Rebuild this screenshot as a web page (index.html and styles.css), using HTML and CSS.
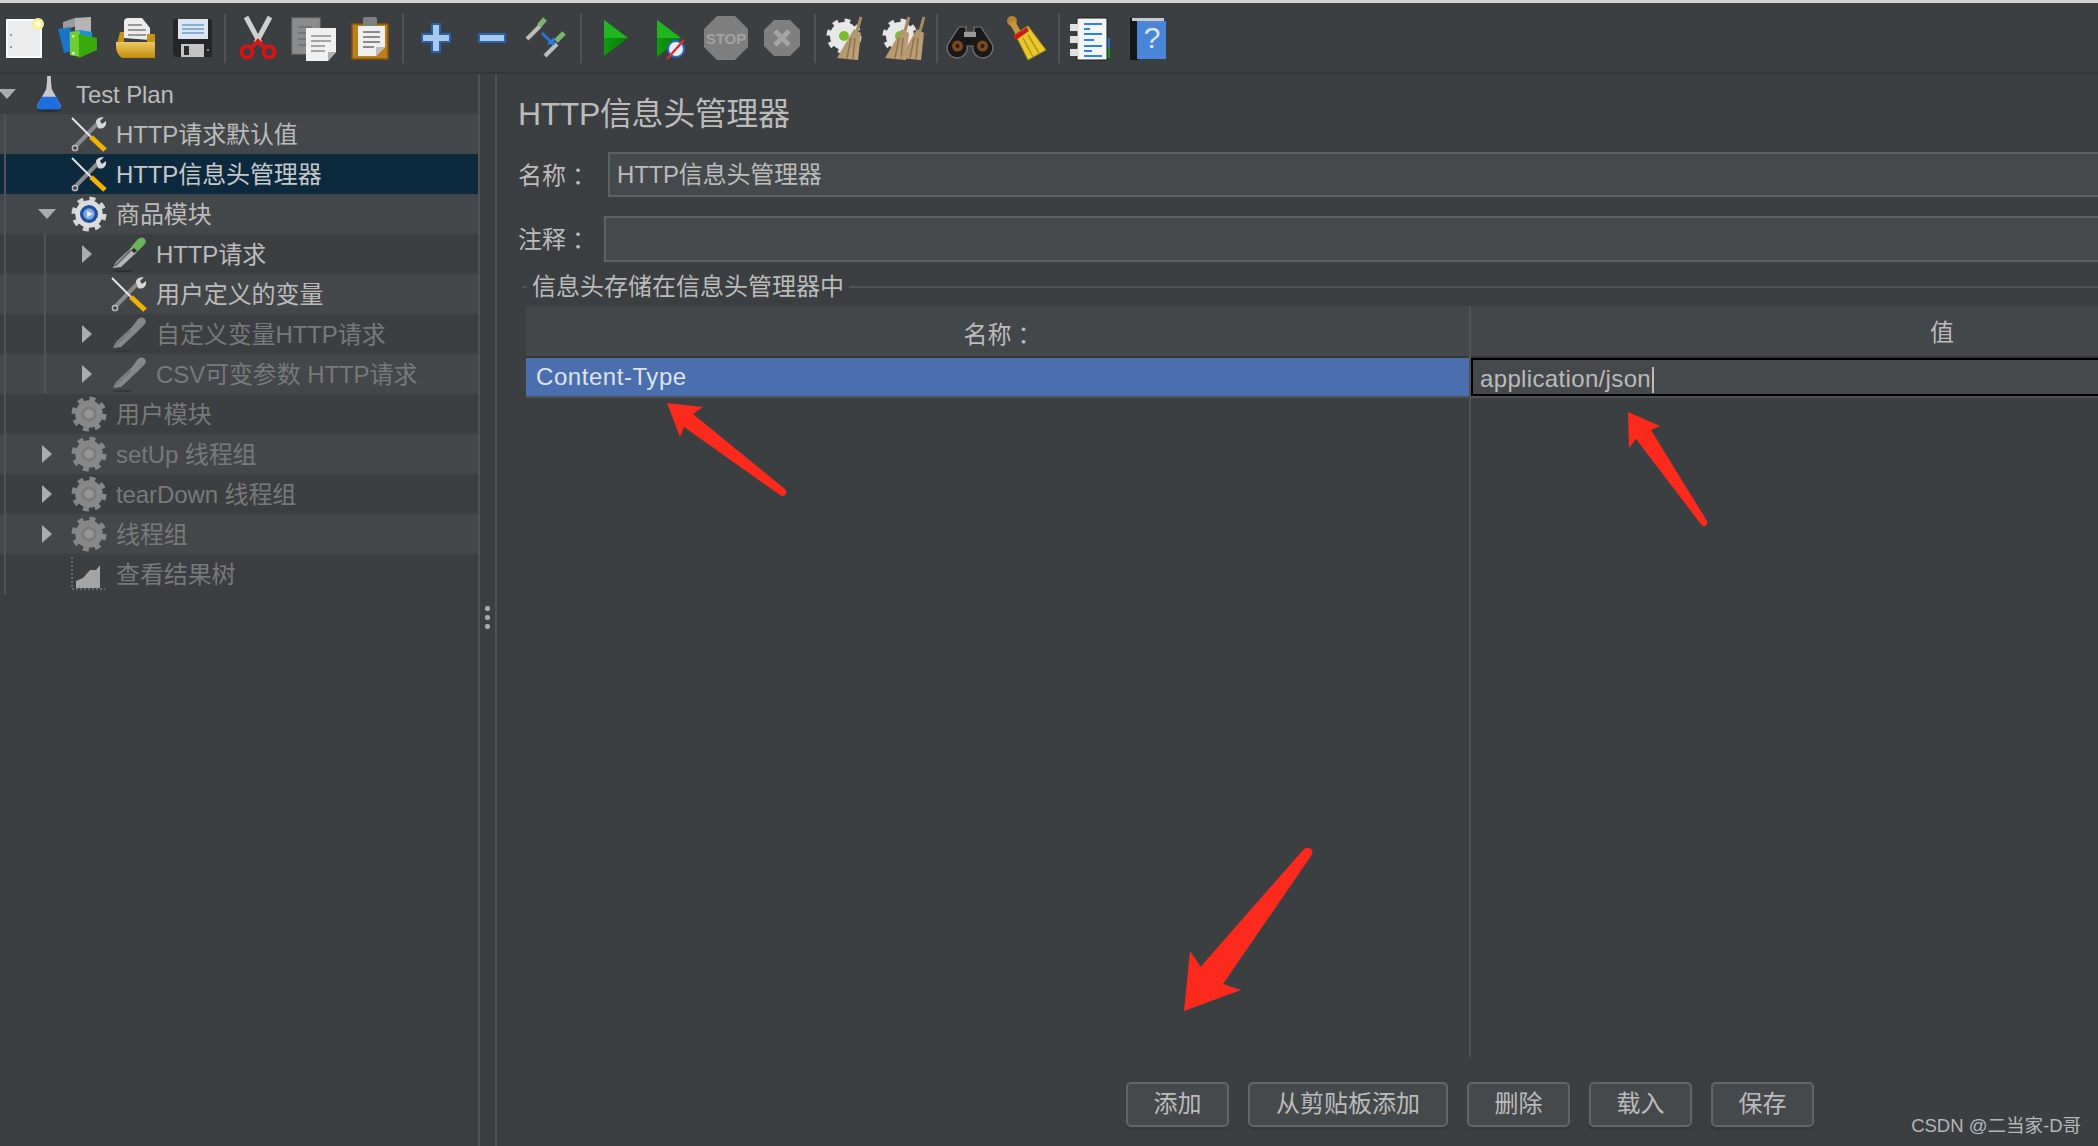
FILE: index.html
```html
<!DOCTYPE html>
<html lang="zh-CN">
<head>
<meta charset="utf-8">
<title>HTTP信息头管理器</title>
<link rel="stylesheet" href="styles.css">
</head>
<body>
<svg class="defs" width="0" height="0" aria-hidden="true">
  <defs>
    <linearGradient id="gFolder" x1="0" y1="0" x2="0" y2="1"><stop offset="0" stop-color="#f0c860"/><stop offset="1" stop-color="#c08a10"/></linearGradient>
    <linearGradient id="gGreen" x1="0" y1="0" x2="1" y2="0"><stop offset="0" stop-color="#0f9a0f"/><stop offset="1" stop-color="#0a7a0a"/></linearGradient>
    <linearGradient id="gBroom" x1="0" y1="0" x2="1" y2="1"><stop offset="0" stop-color="#a58a66"/><stop offset="1" stop-color="#c4a678"/></linearGradient>
    <symbol id="tools" viewBox="0 0 36 36">
      <path d="M3 32 L26 8" stroke="#8a8a8a" stroke-width="4" fill="none"/>
      <circle cx="4" cy="32" r="2.6" fill="#3c3f41" stroke="#bdbdbd" stroke-width="1.5"/>
      <path d="M26 9 C23 4 27 1 33 1 L29 5 L31 8 L35 5 C36 11 31 14 27 12 Z" fill="#d8d8d8"/>
      <path d="M1 2 L20 21" stroke="#e8e8e8" stroke-width="1.8"/>
      <path d="M20 21 L34 34" stroke="#f0b400" stroke-width="5"/>
    </symbol>
    <symbol id="flask" viewBox="0 0 36 38">
      <path d="M16 5 L16 0 L20 0 L20 5 L21 14 L30 30 Q31 35 27 35 L9 35 Q5 35 6 30 L15 14 Z" fill="#c8c8c8"/>
      <path d="M10 22 L26 22 L30 31 Q31 36 26 36 L10 36 Q5 36 6 31 Z" fill="#1d6fe0"/>
      <ellipse cx="18" cy="36.500" rx="14" ry="1.500" fill="#2d3032"/>
    </symbol>
    <symbol id="gear" viewBox="0 0 38 38">
      <circle cx="19" cy="19" r="15.5" fill="none" stroke="#d4d4d4" stroke-width="6" stroke-dasharray="6 6.17"/>
      <circle cx="19" cy="19" r="14.500" fill="#dcdcdc"/>
      <circle cx="19" cy="19" r="9.500" fill="#1f4f9e"/>
      <circle cx="19" cy="19" r="6" fill="#7fa8dc"/>
      <path d="M17 15.5 L23 19 L17 22.5 Z" fill="#e8eef6"/>
    </symbol>
    <symbol id="gear-off" viewBox="0 0 38 38">
      <circle cx="19" cy="19" r="15.5" fill="none" stroke="#868686" stroke-width="6" stroke-dasharray="6 6.17"/>
      <circle cx="19" cy="19" r="14.500" fill="#888888"/>
      <circle cx="19" cy="19" r="8" fill="#7c7c7c"/>
      <circle cx="19" cy="19" r="5" fill="#959595"/>
    </symbol>
    <symbol id="pipette" viewBox="0 0 36 36">
      <path d="M2 32 L5 26 L21 11 L26 16 L10 31 Z" fill="#b5b5b5"/>
      <path d="M4 30 L20 14" stroke="#6c6c6c" stroke-width="2"/>
      <path d="M20 11 L27 3 Q31 0 34 3 Q36 6 33 9 L26 16 Z" fill="#6cb35c"/>
      <path d="M23 12 L26 15 L23 17 L20 14 Z" fill="#2d3032"/>
      <ellipse cx="12" cy="35" rx="10" ry="1" fill="#2d3032"/>
    </symbol>
    <symbol id="pipette-off" viewBox="0 0 36 36">
      <path d="M2 32 L5 26 L21 11 L27 3 Q31 0 34 3 Q36 6 33 9 L26 16 L10 31 Z" fill="#878787"/>
      <path d="M5 29 L20 14" stroke="#737373" stroke-width="1.500"/>
      <ellipse cx="12" cy="35" rx="10" ry="1" fill="#35383a"/>
    </symbol>
    <symbol id="chart" viewBox="0 0 36 36">
      <path d="M1 1 V33 H34" stroke="#777a7c" stroke-width="1.4" stroke-dasharray="2 2" fill="none"/>
      <path d="M5 32 V25 L12 22 L19 14 L25 14 L29 9 V32 Z" fill="#a4a4a4"/>
    </symbol>
    <symbol id="run" viewBox="0 0 48 48">
      <path d="M14 6 L38 24 L14 42 Z" fill="url(#gGreen)"/>
      <path d="M14 6 L38 24 L14 24 Z" fill="#21b521"/>
    </symbol>
    <symbol id="clearGear" viewBox="0 0 48 48">
      <circle cx="20" cy="22" r="15" fill="none" stroke="#e4e4e4" stroke-width="5" stroke-dasharray="5.5 6.3"/>
      <circle cx="20" cy="22" r="14" fill="#e8e8e8"/>
      <circle cx="20" cy="22" r="5" fill="#7cbc30"/>
    </symbol>
    <symbol id="besom" viewBox="0 0 48 48">
      <path d="M37 3 L33 17" stroke="#a48a62" stroke-width="3"/>
      <path d="M30 15 L37 19 L34 46 L13 44 Z" fill="url(#gBroom)"/>
      <path d="M27 24 L23 44 M31 24 L29 45" stroke="#8a7050" stroke-width="1.4"/>
    </symbol>
  </defs>
</svg>

<div class="topline"></div>

<div class="toolbar">
  <div class="tb"><svg class="tb-icon" viewBox="0 0 48 48"><rect x="7" y="6" width="34" height="37" fill="#ececec" stroke="#fafafa" stroke-width="2"/><rect x="10" y="20" width="2" height="2" fill="#999"/><rect x="10" y="32" width="2" height="2" fill="#999"/><circle cx="38" cy="10" r="6" fill="#f6ee9a"/><circle cx="38" cy="10" r="3" fill="#fffde0"/></svg></div>
  <div class="tb"><svg class="tb-icon" viewBox="0 0 48 48"><path d="M7 8 L19 4 L21 12 L7 16 Z" fill="#9c9c9c"/><path d="M19 4 L35 3 L35 18 L19 18 Z" fill="#b5b5b5"/><path d="M2 15 L14 13 L20 36 L8 39 Z" fill="#1c74c8"/><path d="M13 18 L24 16 L36 18 L36 32 L14 40 Z" fill="#1f8ed8"/><path d="M14 18 L24 17 L24 43 L14 41 Z" fill="#6fcf2f"/><path d="M23 20 L41 24 V36 L23 44 Z" fill="#3aa90a"/><rect x="16" y="38" width="2.5" height="2.5" fill="#e8ffe0"/><rect x="16" y="21" width="2.5" height="2.5" fill="#c8f0b0"/></svg></div>
  <div class="tb"><svg class="tb-icon" viewBox="0 0 48 48"><path d="M12 24 V8 Q12 4 16 4 H30 L38 14 V26 Z" fill="#ececec"/><path d="M16 11 H30 M16 16 H34 M16 21 H34" stroke="#9a9a9a" stroke-width="2"/><path d="M8 18 H12 V28 H35 L35 20 H43 V43 H10 Q4 38 5 30 Z" fill="#c49418"/><path d="M4 28 H43 V44 H10 Q4 40 4 32 Z" fill="url(#gFolder)"/></svg></div>
  <div class="tb"><svg class="tb-icon" viewBox="0 0 48 48"><path d="M5 7 Q5 5 7 5 H42 L44 7 V43 H8 L5 41 Z" fill="#252627"/><rect x="10" y="5" width="30" height="20" fill="#dde6f0"/><path d="M14 11 H36 M14 15 H36 M14 19 H36" stroke="#8aaed0" stroke-width="2"/><rect x="13" y="30" width="23" height="13" fill="#c4c4c4"/><rect x="16" y="32" width="5" height="9" fill="#2c2c2c"/><rect x="39" y="35" width="2" height="2" fill="#888"/></svg></div>
  <span class="sep"></span>
  <div class="tb"><svg class="tb-icon" viewBox="0 0 48 48"><path d="M12 3 L26 29 M36 3 L22 29" stroke="#d0d0d0" stroke-width="5" fill="none"/><circle cx="13" cy="38" r="5.5" fill="none" stroke="#d31515" stroke-width="4"/><circle cx="35" cy="38" r="5.5" fill="none" stroke="#d31515" stroke-width="4"/><path d="M17 34 L24 27 L31 34" stroke="#d31515" stroke-width="4" fill="none"/></svg></div>
  <div class="tb"><svg class="tb-icon" viewBox="0 0 48 48"><rect x="2" y="4" width="28" height="36" fill="#8c8c8c" stroke="#7a7a7a"/><path d="M8 13 H22 M8 19 H22 M8 25 H22 M8 31 H22" stroke="#757575" stroke-width="2"/><path d="M16 14 H46 V38 L38 47 H16 Z" fill="#f0f0f0"/><path d="M21 22 H41 M21 27 H41 M21 32 H35 M21 37 H35" stroke="#a5a5a5" stroke-width="2"/><path d="M38 47 V38 H46 Z" fill="#b0b0b0"/></svg></div>
  <div class="tb"><svg class="tb-icon" viewBox="0 0 48 48"><rect x="6" y="10" width="36" height="35" fill="#b97f1f" stroke="#84550c" stroke-width="1.5"/><rect x="17" y="3" width="14" height="9" rx="2" fill="#7f7f7f"/><path d="M12 12 H39 V33 L30 42 H12 Z" fill="#f0f0f0"/><path d="M17 18 H34 M17 23 H34 M17 28 H34 M17 33 H28" stroke="#8c8c8c" stroke-width="2"/><path d="M30 42 V33 H39 Z" fill="#bdbdbd"/></svg></div>
  <span class="sep"></span>
  <div class="tb"><svg class="tb-icon" viewBox="0 0 48 48"><path d="M20 10 H28 V20 H38 V28 H28 V38 H20 V28 H10 V20 H20 Z" fill="#a8c8ec" stroke="#2a62aa" stroke-width="2"/></svg></div>
  <div class="tb"><svg class="tb-icon" viewBox="0 0 48 48"><rect x="11" y="20" width="26" height="8" fill="#a8c8ec" stroke="#2a62aa" stroke-width="2"/></svg></div>
  <div class="tb"><svg class="tb-icon" viewBox="0 0 48 48"><path d="M3 25 L16 12" stroke="#bcbcbc" stroke-width="4"/><path d="M15 12 L21 5" stroke="#7cb56c" stroke-width="5"/><path d="M24 38 L36 26" stroke="#bcbcbc" stroke-width="4" transform="translate(-3 4)"/><path d="M33 30 L41 22" stroke="#7cb56c" stroke-width="5" transform="translate(-1 -3)"/><path d="M18 19 L28 29" stroke="#2a7ae4" stroke-width="2.5"/><path d="M23 30 L31 31 L30 23 Z" fill="#2a7ae4"/></svg></div>
  <span class="sep"></span>
  <div class="tb"><svg class="tb-icon"><use href="#run"/></svg></div>
  <div class="tb"><svg class="tb-icon" viewBox="0 0 48 48"><path d="M11 6 L35 24 L11 43 Z" fill="url(#gGreen)"/><path d="M11 6 L35 24 L11 24 Z" fill="#21b521"/><circle cx="30" cy="35" r="8" fill="#e8f0fa" stroke="#2a6ac8" stroke-width="2"/><path d="M21 45 L38 26" stroke="#d83030" stroke-width="2.5"/></svg></div>
  <div class="tb"><svg class="tb-icon" viewBox="0 0 48 48"><path d="M15 2 H33 L46 15 V33 L33 46 H15 L2 33 V15 Z" fill="#7f7f7f"/><text x="24" y="30" text-anchor="middle" class="stop-text">STOP</text></svg></div>
  <div class="tb"><svg class="tb-icon" viewBox="0 0 48 48"><path d="M16 6 H32 L42 16 V32 L32 42 H16 L6 32 V16 Z" fill="#7f7f7f"/><path d="M17 17 L31 31 M31 17 L17 31" stroke="#a4a4a4" stroke-width="5"/></svg></div>
  <span class="sep"></span>
  <div class="tb"><svg class="tb-icon"><use href="#clearGear"/><use href="#besom" /></svg></div>
  <div class="tb"><svg class="tb-icon" viewBox="0 0 48 48"><use href="#clearGear" width="48" height="48"/><use href="#besom" width="48" height="48" x="-8"/><use href="#besom" width="48" height="48" x="7"/></svg></div>
  <span class="sep"></span>
  <div class="tb"><svg class="tb-icon" viewBox="0 0 48 48"><path d="M13 13 H20 V18 H28 V13 H35 L46 30 A10 10 0 1 1 27 32 H21 A10 10 0 1 1 2 30 Z" fill="#191919" stroke="#777" stroke-width="1.2"/><rect x="18" y="18" width="12" height="5" fill="#9a9a9a"/><circle cx="11.500" cy="32" r="5.500" fill="#7a4a22"/><circle cx="36.500" cy="32" r="5.500" fill="#7a4a22"/><circle cx="11.500" cy="32" r="2" fill="#2a1a10"/><circle cx="36.500" cy="32" r="2" fill="#2a1a10"/></svg></div>
  <div class="tb"><svg class="tb-icon" viewBox="0 0 48 48"><circle cx="10" cy="7" r="5" fill="#b8822e"/><path d="M10 8 L18 22" stroke="#c8963c" stroke-width="6"/><path d="M13 20 L26 12 L44 36 L26 46 Z" fill="#e8c82a" stroke="#9a8818"/><path d="M11 22 L25 13 L27 17 L14 26 Z" fill="#c81e1e"/><path d="M21 24 L31 43 M26 21 L37 39" stroke="#b09a18" stroke-width="1.5"/></svg></div>
  <span class="sep"></span>
  <div class="tb"><svg class="tb-icon" viewBox="0 0 48 48"><rect x="36" y="24" width="6" height="10" fill="#2a6ac8"/><rect x="36" y="34" width="6" height="10" fill="#1d8a1d"/><rect x="9" y="4" width="30" height="42" fill="#f5f5f5" stroke="#1c1c1c"/><path d="M16 10 H34 M16 20 H34 M16 32 H34 M16 42 H34" stroke="#2a82ec" stroke-width="2"/><path d="M16 15 H22 M16 26 H26 M16 37 H24" stroke="#2a82ec" stroke-width="2"/><rect x="2" y="10" width="9" height="7" fill="#e0e0e0"/><rect x="2" y="22" width="9" height="7" fill="#e0e0e0"/><rect x="2" y="35" width="9" height="7" fill="#e0e0e0"/></svg></div>
  <div class="tb"><svg class="tb-icon" viewBox="0 0 48 48"><rect x="6" y="4" width="8" height="42" fill="#151515"/><rect x="8" y="4" width="32" height="3" fill="#c8c8c8"/><rect x="13" y="7" width="29" height="38" fill="#4a86d8"/><text x="28" y="34" text-anchor="middle" class="help-text">?</text></svg></div>
</div>

<div class="main">
  <div class="tree">
    <span class="guide guide-outer"></span>
    <span class="guide guide-inner"></span>
    <div class="row d0"><span class="toggle open"></span><svg class="icon"><use href="#flask"/></svg><span class="label">Test Plan</span></div>
    <div class="row d1 alt"><span class="toggle"></span><svg class="icon"><use href="#tools"/></svg><span class="label">HTTP请求默认值</span></div>
    <div class="row d1 selected"><span class="toggle"></span><svg class="icon"><use href="#tools"/></svg><span class="label">HTTP信息头管理器</span></div>
    <div class="row d1 alt"><span class="toggle open"></span><svg class="icon"><use href="#gear"/></svg><span class="label">商品模块</span></div>
    <div class="row d2"><span class="toggle closed"></span><svg class="icon"><use href="#pipette"/></svg><span class="label">HTTP请求</span></div>
    <div class="row d2 alt"><span class="toggle"></span><svg class="icon"><use href="#tools"/></svg><span class="label">用户定义的变量</span></div>
    <div class="row d2 off"><span class="toggle closed"></span><svg class="icon"><use href="#pipette-off"/></svg><span class="label">自定义变量HTTP请求</span></div>
    <div class="row d2 alt off"><span class="toggle closed"></span><svg class="icon"><use href="#pipette-off"/></svg><span class="label">CSV可变参数 HTTP请求</span></div>
    <div class="row d1 off"><span class="toggle"></span><svg class="icon"><use href="#gear-off"/></svg><span class="label">用户模块</span></div>
    <div class="row d1 alt off"><span class="toggle closed"></span><svg class="icon"><use href="#gear-off"/></svg><span class="label">setUp 线程组</span></div>
    <div class="row d1 off"><span class="toggle closed"></span><svg class="icon"><use href="#gear-off"/></svg><span class="label">tearDown 线程组</span></div>
    <div class="row d1 alt off"><span class="toggle closed"></span><svg class="icon"><use href="#gear-off"/></svg><span class="label">线程组</span></div>
    <div class="row d1 off"><span class="toggle"></span><svg class="icon"><use href="#chart"/></svg><span class="label">查看结果树</span></div>
  </div>

  <div class="splitter"><i></i><i></i><i></i></div>

  <div class="panel">
    <h1 class="title">HTTP信息头管理器</h1>
    <div class="field field-name">
      <label class="field-label">名称<span class="colon">：</span></label>
      <div class="input">HTTP信息头管理器</div>
    </div>
    <div class="field field-comment">
      <label class="field-label">注释<span class="colon">：</span></label>
      <div class="input"></div>
    </div>
    <div class="legend"><span class="legend-line short"></span><span>信息头存储在信息头管理器中</span><span class="legend-line"></span></div>
    <div class="table">
      <div class="col col-name">
        <div class="th th-name">名称<span class="colon">：</span></div>
        <div class="td td-selected">Content-Type</div>
      </div>
      <div class="col col-value">
        <div class="th">值</div>
        <div class="td"><div class="editor">application/json<span class="caret"></span></div></div>
      </div>
    </div>
    <div class="buttons">
      <button class="btn">添加</button>
      <button class="btn btn-wide">从剪贴板添加</button>
      <button class="btn">删除</button>
      <button class="btn">载入</button>
      <button class="btn">保存</button>
    </div>
  </div>
</div>

<div class="watermark">CSDN @二当家-D哥</div>

<svg class="arrows" viewBox="0 0 2098 1146" aria-hidden="true">
  <path d="M667 403 L703 407 L693 414 L785 489 Q788 493 785 495 Q783 497 780 495 L684 427 L680 437 Z"/>
  <path d="M1628 412 L1660 426 L1651 430 L1707 521 Q1708 525 1705 526 Q1702 527 1700 523 L1636 439 L1629 448 Z"/>
  <path d="M1184 1011 L1190 951 L1200.700 966.700 L1303 850 Q1307 846 1311 849 Q1314 852 1311 856 L1223 984 L1241 990 Z"/>
</svg>
</body>
</html>
```
FILE: styles.css
```css
* { box-sizing: border-box; }

html, body {
  margin: 0;
  height: 100%;
}

body {
  position: relative;
  width: 2098px;
  height: 1146px;
  overflow: hidden;
  display: flex;
  flex-direction: column;
  background: #3c3f41;
  color: #bbbbbb;
  font-family: "Liberation Sans", "Noto Sans CJK SC", sans-serif;
  font-size: 24px;
  line-height: 28px;
}

.defs { position: absolute; }

.topline {
  flex: none;
  height: 3px;
  background: #d4d4d4;
}

/* toolbar */
.toolbar {
  flex: none;
  display: flex;
  align-items: flex-start;
  height: 71px;
  margin-left: -4px;
  padding-top: 11px;
  border-bottom: 2px solid #343739;
}

.tb {
  flex: none;
  width: 56px;
  height: 48px;
  display: flex;
  justify-content: center;
}

.tb-icon {
  width: 48px;
  height: 48px;
}

.sep {
  flex: none;
  width: 2px;
  height: 49px;
  margin: 0 4px;
  background: #505355;
}

.stop-text {
  font: bold 15px "Liberation Sans", sans-serif;
  fill: #a2a2a2;
}

.help-text {
  font: 30px "Liberation Sans", sans-serif;
  fill: #dce8f8;
}

/* main split */
.main {
  flex: 1;
  display: flex;
  min-height: 0;
}

.tree {
  position: relative;
  flex: none;
  width: 480px;
  border-right: 2px solid #505355;
  overflow: hidden;
}

.guide {
  position: absolute;
  width: 2px;
  background: #505355;
}

.guide-outer { left: 4px; top: 40px; height: 480px; }
.guide-inner { left: 44px; top: 160px; height: 160px; }

.row {
  display: flex;
  align-items: center;
  height: 40px;
  white-space: nowrap;
}

.row.d1 { padding-left: 40px; }
.row.d2 { padding-left: 80px; }
.row.alt { background: #44474a; }
.row.selected { background: #0d293e; color: #c6c9cb; }
.row.off { color: #77797b; }

.toggle {
  position: relative;
  z-index: 1;
  flex: none;
  width: 14px;
  height: 18px;
  margin-right: 17px;
}

.toggle.open::before {
  content: "";
  position: absolute;
  left: -2px;
  top: 4px;
  border-style: solid;
  border-width: 10px 9px 0;
  border-color: #a9abad transparent transparent;
}

.toggle.closed::before {
  content: "";
  position: absolute;
  left: 2px;
  top: 0;
  border-style: solid;
  border-width: 9px 0 9px 10px;
  border-color: transparent transparent transparent #a9abad;
}

.icon {
  flex: none;
  width: 36px;
  height: 36px;
}

.label {
  margin-left: 9px;
  padding-top: 2px;
  letter-spacing: -0.1px;
}

/* splitter */
.splitter {
  flex: none;
  width: 17px;
  border-right: 2px solid #505355;
  display: flex;
  flex-direction: column;
  justify-content: center;
  align-items: center;
  gap: 4px;
  padding-top: 14px;
}

.splitter i {
  display: block;
  width: 5px;
  height: 5px;
  border-radius: 2px;
  background: #a8aaac;
}

/* panel */
.panel {
  flex: 1;
  min-width: 0;
  padding: 20px 0 0 21px;
  overflow: hidden;
}

.title {
  margin: 0 0 18px;
  font-size: 32px;
  font-weight: normal;
  line-height: 40px;
  letter-spacing: -0.4px;
  white-space: nowrap;
}

.field {
  display: flex;
  align-items: center;
  height: 45px;
  margin-right: -12px;
}

.field-comment {
  height: 46px;
  margin-top: 19px;
}

.field-label {
  flex: none;
}

.colon {
  margin-left: 6px;
  font-family: "Noto Sans CJK TC", sans-serif;
}

.field-name .field-label { width: 90px; }
.field-comment .field-label { width: 86px; }

.input {
  flex: 1;
  height: 100%;
  padding-left: 7px;
  border: 2px solid #5e6163;
  background: #46494b;
  line-height: 41px;
  letter-spacing: -0.2px;
  white-space: nowrap;
}

.legend {
  display: flex;
  align-items: center;
  gap: 5px;
  height: 34px;
  margin: 8px -12px 0 4px;
  white-space: nowrap;
}

.legend-line {
  flex: 1;
  height: 2px;
  background: #505355;
}

.legend-line.short {
  flex: none;
  width: 5px;
}

.table {
  display: flex;
  height: 751px;
  margin: 2px -315px 0 8px;
}

.col-name {
  flex: none;
  width: 945px;
  border-right: 2px solid #505355;
}

.col-value {
  flex: 1;
}

.th {
  height: 52px;
  border-bottom: 2px solid #323537;
  background: #44474a;
  line-height: 53px;
  text-align: center;
}

.th-name {
  padding-left: 10px;
}

.td {
  height: 40px;
  border-bottom: 2px solid #505355;
}

.td-selected {
  padding-left: 10px;
  background: #4b6eaf;
  line-height: 38px;
  letter-spacing: 0.55px;
  color: #dfe3e8;
}

.editor {
  height: 38px;
  padding-left: 7px;
  border: 2px solid #000000;
  background: #46494b;
  line-height: 37px;
  letter-spacing: 0.35px;
  white-space: nowrap;
}

.caret {
  display: inline-block;
  width: 2px;
  height: 26px;
  margin-left: 1px;
  vertical-align: -6px;
  background: #bbbbbb;
}

.buttons {
  display: flex;
  gap: 19px;
  margin: 25px 0 0 608px;
}

.btn {
  width: 103px;
  height: 45px;
  padding: 0 0 2px;
  border: 2px solid #626567;
  border-radius: 5px;
  background: #46494b;
  box-shadow: 0 3px 0 #36393b;
  color: #bbbbbb;
  font: inherit;
}

.btn-wide { width: 200px; }

.watermark {
  position: absolute;
  right: 17px;
  top: 1113px;
  font-size: 18.5px;
  line-height: 26px;
  color: #b4b6b8;
  white-space: nowrap;
}

.arrows {
  position: absolute;
  left: 0;
  top: 0;
  width: 2098px;
  height: 1146px;
  fill: #fc2a1c;
  pointer-events: none;
}
```
